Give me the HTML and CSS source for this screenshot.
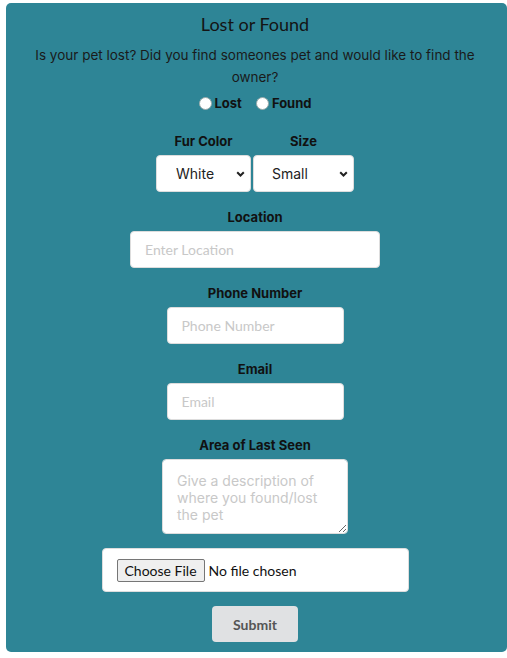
FILE: index.html
```html
<!DOCTYPE html>
<html lang="en">
<head>
<meta charset="utf-8">
<title>Lost or Found</title>
<link rel="stylesheet" href="styles.css">
</head>
<body>
<form class="card">
  <h2 class="title">Lost or Found</h2>
  <p class="intro">Is your pet lost? Did you find someones pet and would like to find the owner?</p>
  <div class="radios">
    <label class="radio"><input type="radio" name="status"><span>Lost</span></label>
    <label class="radio"><input type="radio" name="status"><span>Found</span></label>
  </div>
  <div class="pair">
    <div class="field">
      <label class="label">Fur Color</label>
      <select class="select select-fur"><option>White</option></select>
    </div>
    <div class="field">
      <label class="label">Size</label>
      <select class="select select-size"><option>Small</option></select>
    </div>
  </div>
  <div class="field">
    <label class="label">Location</label>
    <input class="input input-wide" type="text" placeholder="Enter Location">
  </div>
  <div class="field">
    <label class="label">Phone Number</label>
    <input class="input input-mid" type="text" placeholder="Phone Number">
  </div>
  <div class="field">
    <label class="label">Email</label>
    <input class="input input-mid" type="text" placeholder="Email">
  </div>
  <div class="field field-last">
    <label class="label">Area of Last Seen</label>
    <textarea class="area" placeholder="Give a description of where you found/lost the pet"></textarea>
  </div>
  <div class="filebox">
    <input class="file" type="file">
  </div>
  <button class="submit" type="button">Submit</button>
</form>
</body>
</html>
```

FILE: styles.css
```css
* { box-sizing: border-box; }
html, body { margin: 0; padding: 0; background: #fff; }
body { padding: 3px 0 0 6px; }

.card {
  width: 501px;
  background: #2e8596;
  border-radius: 5px;
  padding: 10px 3px 10px 0;
  display: flex;
  flex-direction: column;
  align-items: center;
  color: #111;
}

.title {
  margin: 0;
  font-family: Lato, sans-serif;
  font-weight: 400;
  font-size: 18px;
  line-height: 22px;
  color: #141414;
}

.intro {
  margin: 9px 0 0;
  padding: 0 24px;
  text-align: center;
  font-family: Inter, sans-serif;
  font-size: 13.5px;
  line-height: 22px;
  color: #1a1a1a;
}

.radios {
  margin-top: 6px;
  display: flex;
  gap: 14px;
  height: 18px;
  align-items: center;
}
.radio {
  display: flex;
  align-items: center;
  gap: 3px;
  font-family: Inter, sans-serif;
  font-weight: 700;
  font-size: 13px;
  color: #111;
}
.radio input {
  appearance: none;
  margin: 0;
  width: 13px;
  height: 13px;
  border-radius: 50%;
  background: #fff;
  border: 1px solid #9aa;
}

.pair {
  margin-top: 20px;
  display: flex;
  gap: 2px;
}

.field {
  display: flex;
  flex-direction: column;
  align-items: center;
  margin-bottom: 16px;
}
.pair .field { margin-bottom: 0; }
.pair + .field { margin-top: 16px; }
.field-last { margin-bottom: 14px; }

.label {
  font-family: Inter, sans-serif;
  font-weight: 700;
  font-size: 13px;
  line-height: 18px;
  margin-bottom: 5px;
  color: #111;
}

.select {
  appearance: none;
  height: 37px;
  border: 1px solid #ddd;
  border-radius: 4px;
  background: #fff url("data:image/svg+xml,%3Csvg xmlns='http://www.w3.org/2000/svg' width='9' height='6' viewBox='0 0 9 6'%3E%3Cpath d='M1.2 1.2 L4.5 4.5 L7.8 1.2' fill='none' stroke='%23222' stroke-width='2'/%3E%3C/svg%3E") no-repeat right 5px center;
  font-family: Inter, sans-serif;
  font-size: 14px;
  color: #222;
  margin: 0;
}
.select-fur { width: 95px; padding-left: 19px; }
.select-size { width: 101px; padding-left: 18px; }

.input {
  height: 37px;
  border: 1px solid #ddd;
  border-radius: 4px;
  background: #fff;
  font-family: Lato, sans-serif;
  font-size: 14px;
  padding: 0 14px;
  margin: 0;
}
.input::placeholder { color: #c8c8c8; }
.input-wide { width: 250px; }
.input-mid { width: 177px; }

.area {
  width: 186px;
  height: 75px;
  border: 1px solid #ddd;
  border-radius: 4px;
  background: #fff;
  font-family: Inter, sans-serif;
  font-size: 14px;
  line-height: 17px;
  padding: 12px 14px;
  margin: 0;
  resize: both;
}
.area::placeholder { color: #c8c8c8; }

.filebox {
  width: 307px;
  height: 44px;
  background: #fff;
  border: 1px solid #ddd;
  border-radius: 4px;
  display: flex;
  align-items: center;
  padding-left: 14px;
}
.file {
  font-family: Lato, sans-serif;
  font-size: 14px;
  color: #111;
}
.file::file-selector-button {
  font-family: Lato, sans-serif;
  font-size: 14px;
  color: #111;
  background: #efefef;
  border: 1px solid #767676;
  border-radius: 2px;
  height: 23px;
  padding: 0 7px;
  margin-right: 4px;
}

.submit {
  margin-top: 14px;
  width: 86px;
  height: 36px;
  border: 0;
  border-radius: 4px;
  background: #e0e1e3;
  font-family: Lato, sans-serif;
  font-weight: 700;
  font-size: 14px;
  color: #555;
}
```
